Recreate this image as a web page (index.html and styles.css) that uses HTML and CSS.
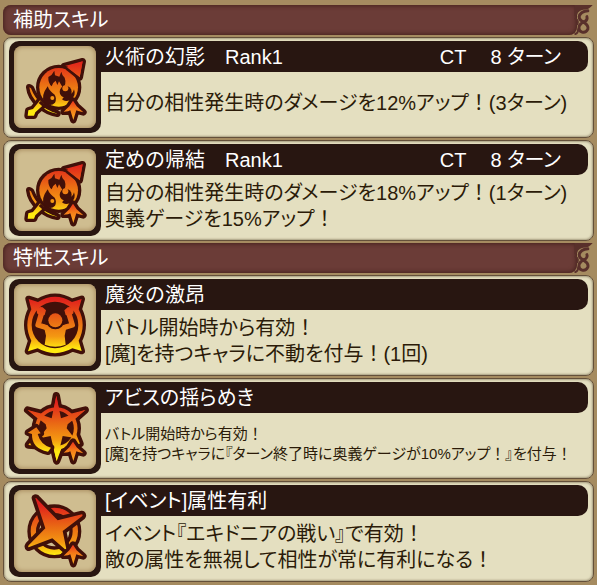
FILE: index.html
```html
<!DOCTYPE html>
<html lang="ja">
<head>
<meta charset="utf-8">
<meta name="viewport" content="width=device-width, initial-scale=1">
<title>スキル</title>
<link rel="stylesheet" href="styles.css">
</head>
<body>
<svg class="defs" aria-hidden="true">
  <defs>
    <linearGradient id="fire" gradientUnits="userSpaceOnUse" x1="0" y1="75" x2="0" y2="225">
      <stop offset="0" stop-color="#e0201c"/>
      <stop offset=".45" stop-color="#ea6c14"/>
      <stop offset=".75" stop-color="#f49812"/>
      <stop offset="1" stop-color="#ffea10"/>
    </linearGradient>
    <linearGradient id="ember" gradientUnits="userSpaceOnUse" x1="0" y1="188" x2="0" y2="250">
      <stop offset="0" stop-color="#e8201c"/>
      <stop offset=".5" stop-color="#f47a18"/>
      <stop offset="1" stop-color="#fca820"/>
    </linearGradient>
    <symbol id="rise" viewBox="42 30 246 246">
      <path class="shape ember" d="M219 194 L230 211 L250 229 L235 225 L229 223 L220 252 L211 223 L204 226 L191 227 L208 211 Z"/>
    </symbol>
    <symbol id="flourish" viewBox="0 0 20 31">
      <path class="curl-fill" d="M0 0 H19 Q15 5 9 5 Q4 6 3 10 L0 12 Z"/>
      <path class="curl" d="M14 6 Q6 7 5 12 Q5 16 10 18 Q15 21 14 25 Q12 29 8 28 Q4 27 5 22 Q6 19 11 17 Q14 15 13 12"/>
      <path class="curl thin" d="M1 14 Q5 16 3 20 M1 30 Q4 29 4 25"/>
    </symbol>
    <symbol id="fireball" viewBox="42 30 246 246">
      <path class="shape" d="M88 154 L93 157 Q103 184 124 204 L172 233 Q140 228 118 206 Q91 183 88 154 Z"/>
      <path class="shape" d="M83 239 L85 223 L99 219 L125 187 L139 199 L106 229 L102 239 Z"/>
      <path class="shape" d="M192 91 L248 76 L239 124 L224 112 Z"/>
      <circle class="shape" cx="176" cy="154" r="58"/>
      <path class="flame" d="M200 95 L248 76 L239 124 Z"/>
      <path class="edge" d="M200 98 L235 126"/>
      <path class="dark" d="M163 104 Q157 117 145 123 Q144 142 155 151 Q158 139 167 134 L172 147 L177 136 L186 151 L187 160 Q201 144 194 125 Q186 119 184 107 L178 122 L165 118 Z"/>
      <path class="dark" d="M143 151 Q148 165 164 176 Q171 187 165 200 Q151 214 133 199 Q121 181 143 151 Z"/>
      <circle class="flame" cx="157" cy="186" r="6"/>
      <circle class="dark" cx="197" cy="167" r="18"/>
      <path class="dark" d="M197 178 Q219 176 222 160 Q230 180 211 192 Q195 199 186 190 Z"/>
      <circle class="flame" cx="196" cy="157" r="9"/>
      <path class="edge" d="M119 198 Q139 219 174 229"/>
    </symbol>
    <symbol id="power" viewBox="42 30 246 246">
      <path class="shape" d="M86 75 L114 84 Q165 53 216 84 L245 75 L236 106 Q260 153 236 200 L245 231 L217 223 Q165 252 113 223 L84 232 L94 200 Q70 153 94 106 Z"/>
      <circle class="dark" cx="165" cy="153" r="70"/>
      <path class="limb" d="M125 116 L114 153 L143 162 M206 116 L217 153 L188 162"/>
      <path class="flame" d="M130 151 Q165 168 201 151 L194 185 L197 212 Q166 224 134 212 L138 185 Z"/>
      <path class="flame" d="M110 105 Q117 97 128 100 L138 109 L134 123 L121 126 L111 118 Z M221 105 Q214 97 203 100 L193 109 L197 123 L210 126 L220 118 Z"/>
      <circle class="dark" cx="166" cy="139" r="27"/>
      <circle class="flame" cx="166" cy="139" r="21"/>
    </symbol>
    <symbol id="sun" viewBox="42 30 246 246">
      <circle class="ring-edge" cx="169" cy="154" r="58"/>
      <path class="shape bold" d="M169 56 L177 100 L200 113 L256 99 L215 135 L224 160 L240 200 L188 205 L170 252 L160 210 L85 204 L110 170 L120 130 L83 99 L138 113 L161 100 Z"/>
      <circle class="dark" cx="169" cy="154" r="60"/>
      <circle class="ring" cx="169" cy="154" r="58"/>
      <path class="flame" d="M169 56 L183 124 L256 99 L203 142 L200 154 L222 182 L188 177 L170 252 L152 177 L118 184 L140 154 L137 142 L83 99 L155 124 Z"/>
      <path class="shape" d="M109 151 L122 169 L113 171 Q122 204 153 212 L144 224 Q94 214 96 171 L84 167 Z"/>
    </symbol>
    <symbol id="star" viewBox="42 30 246 246">
      <circle class="ring-edge wide" cx="163" cy="154" r="63"/>
      <circle class="ring wide" cx="163" cy="154" r="63"/>
      <path class="shape bold" d="M106 54 Q109 53 112 58 L173 121 L246 103 Q249 105 246 109 L188 153 L199 207 L195 208 L157 175 L86 202 Q83 200 86 196 L136 145 Z"/>
    </symbol>
  </defs>
</svg>

<main class="skills">
  <section class="group">
    <header class="group-head">
      <h2 class="group-title">補助スキル</h2>
      <svg class="flourish" aria-hidden="true"><use href="#flourish"/></svg>
    </header>
    <article class="card">
      <div class="icon"><svg viewBox="42 30 246 246" aria-hidden="true"><use href="#fireball" x="42" y="30" width="246" height="246"/><use href="#rise" x="42" y="30" width="246" height="246"/></svg></div>
      <div class="content">
        <div class="bar"><h3 class="name full">火術の幻影　Rank1</h3><p class="turns"><span>CT</span><span>8 ターン</span></p></div>
        <p class="text">自分の相性発生時のダメージを12%アップ<span class="full">！</span>(3ターン)</p>
      </div>
    </article>
    <article class="card">
      <div class="icon"><svg viewBox="42 30 246 246" aria-hidden="true"><use href="#fireball" x="42" y="30" width="246" height="246"/><use href="#rise" x="42" y="30" width="246" height="246"/></svg></div>
      <div class="content">
        <div class="bar"><h3 class="name full">定めの帰結　Rank1</h3><p class="turns"><span>CT</span><span>8 ターン</span></p></div>
        <p class="text">自分の相性発生時のダメージを18%アップ<span class="full">！</span>(1ターン)<br>奥義ゲージを15%アップ<span class="full">！</span></p>
      </div>
    </article>
  </section>
  <section class="group">
    <header class="group-head">
      <h2 class="group-title">特性スキル</h2>
      <svg class="flourish" aria-hidden="true"><use href="#flourish"/></svg>
    </header>
    <article class="card">
      <div class="icon"><svg viewBox="42 30 246 246" aria-hidden="true"><use href="#power" x="42" y="30" width="246" height="246"/></svg></div>
      <div class="content">
        <div class="bar"><h3 class="name full">魔炎の激昂</h3></div>
        <p class="text">バトル開始時から有効<span class="full">！</span><br>[魔]を持つキャラに不動を付与<span class="full">！</span>(1回)</p>
      </div>
    </article>
    <article class="card">
      <div class="icon"><svg viewBox="42 30 246 246" aria-hidden="true"><use href="#sun" x="42" y="30" width="246" height="246"/><use href="#rise" x="42" y="30" width="246" height="246"/></svg></div>
      <div class="content">
        <div class="bar"><h3 class="name">アビスの揺らめき</h3></div>
        <p class="text small">バトル開始時から有効<span class="full">！</span><br>[魔]を持つキャラに『ターン終了時に奥義ゲージが10%アップ<span class="full">！</span>』を付与<span class="full">！</span></p>
      </div>
    </article>
    <article class="card">
      <div class="icon"><svg viewBox="42 30 246 246" aria-hidden="true"><use href="#star" x="42" y="30" width="246" height="246"/><use href="#rise" x="42" y="30" width="246" height="246"/></svg></div>
      <div class="content">
        <div class="bar"><h3 class="name">[イベント]属性有利</h3></div>
        <p class="text">イベント『エキドニアの戦い』で有効<span class="full">！</span><br>敵の属性を無視して相性が常に有利になる<span class="full">！</span></p>
      </div>
    </article>
  </section>
</main>
</body>
</html>
```

FILE: styles.css
```css
* {
  box-sizing: border-box;
}

body {
  margin: 0;
  background: #a58b60;
  color: #2b1b08;
  font-family: "Liberation Sans", "Noto Sans CJK JP", sans-serif;
  font-size: 20px;
  line-height: 26px;
  font-feature-settings: "palt";
}

h2,
h3,
p {
  margin: 0;
  font-size: inherit;
  font-weight: 400;
}

.full {
  font-feature-settings: normal;
}

.defs {
  position: absolute;
  width: 0;
  height: 0;
}

.skills,
.group {
  display: flex;
  flex-direction: column;
  gap: 2px;
}

.skills {
  padding: 5px 3px 2px;
}

.group-head {
  display: flex;
  height: 30px;
  color: #fff;
}

.group-title {
  flex: 1;
  padding: 0 10px;
  line-height: 30px;
  background: #6b3c37;
  border-radius: 8px 0 8px 8px;
  box-shadow: inset 0 0 4px 1px #46211d;
}

.flourish {
  width: 20px;
  height: 30px;
  margin-left: -3px;
}

.curl-fill {
  fill: #59302b;
}

.curl {
  fill: none;
  stroke: #59302b;
  stroke-width: 3;
  stroke-linecap: round;
}

.curl.thin {
  stroke-width: 2;
}

.card {
  display: flex;
  min-height: 101px;
  padding: 3px 5px 4px;
  background: #e4dfc0;
  border: 1px solid #64503a;
  border-radius: 8px;
  box-shadow: inset 0 0 2px 1px #a69c7e;
}

.icon {
  position: relative;
  z-index: 1;
  flex: none;
  width: 92px;
  height: 92px;
  padding: 5px;
  background: #281611;
  border-radius: 10px;
}

.icon svg {
  display: block;
  width: 82px;
  height: 82px;
  background: #cfbd90;
  border-radius: 8px;
  box-shadow: inset 0 0 4px 1px #a98d60;
}

.content {
  flex: 1;
  min-width: 0;
  display: flex;
  flex-direction: column;
}

.bar {
  display: flex;
  justify-content: space-between;
  height: 31px;
  margin-left: -12px;
  padding: 0 27px 0 16px;
  line-height: 32px;
  color: #fff;
  background: #281611;
  border-radius: 0 10px 10px 0;
}

.turns {
  display: flex;
  gap: 24px;
}

.text {
  flex: 1;
  display: flow-root;
  align-content: center;
  padding-left: 4px;
  white-space: nowrap;
}

.small {
  font-size: 15px;
  line-height: 20px;
}

.shape {
  fill: url(#fire);
  stroke: #411009;
  stroke-width: 20;
  stroke-linejoin: round;
  paint-order: stroke;
}

.shape.bold {
  stroke-width: 22;
}

.shape.ember {
  fill: url(#ember);
}

.flame {
  fill: url(#fire);
}

.limb {
  fill: none;
  stroke: url(#fire);
  stroke-width: 16;
  stroke-linejoin: round;
}

.dark {
  fill: #411009;
}

.edge {
  fill: none;
  stroke: #411009;
  stroke-width: 8;
}

.ring,
.ring-edge {
  fill: none;
  stroke: url(#fire);
  stroke-width: 11;
}

.ring-edge {
  stroke: #411009;
  stroke-width: 32;
}

.ring.wide {
  stroke-width: 16;
}

.ring-edge.wide {
  stroke-width: 36;
}
```
